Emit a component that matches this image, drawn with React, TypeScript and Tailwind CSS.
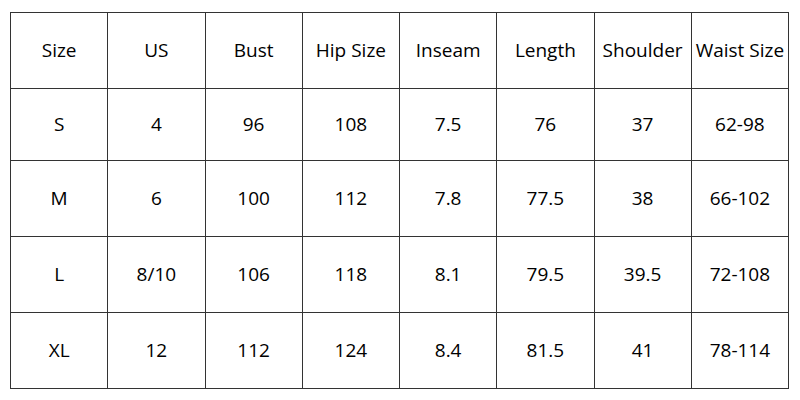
const HEADERS = ['Size', 'US', 'Bust', 'Hip Size', 'Inseam', 'Length', 'Shoulder', 'Waist Size'];

const ROWS = [
  { h: 'h-[72px]', cells: ['S', '4', '96', '108', '7.5', '76', '37', '62-98'] },
  { h: 'h-[76px]', cells: ['M', '6', '100', '112', '7.8', '77.5', '38', '66-102'] },
  { h: 'h-[76px]', cells: ['L', '8/10', '106', '118', '8.1', '79.5', '39.5', '72-108'] },
  { h: 'h-[76px]', cells: ['XL', '12', '112', '124', '8.4', '81.5', '41', '78-114'] },
];

export default function App() {
  return (
    <div className="w-[800px] h-[400px] bg-white pt-[12px] pl-[10px] font-['Open_Sans',sans-serif] text-[19px] text-black">
      <table className="table-fixed border-collapse w-[779px]">
        <thead>
          <tr className="h-[76px]">
            {HEADERS.map(h => (
              <th key={h} className="border border-[#333] font-normal text-center align-middle p-0 whitespace-nowrap">
                {h}
              </th>
            ))}
          </tr>
        </thead>
        <tbody>
          {ROWS.map(row => (
            <tr key={row.cells[0]} className={row.h}>
              {row.cells.map((c, i) => (
                <td key={i} className="border border-[#333] text-center align-middle p-0">
                  {c}
                </td>
              ))}
            </tr>
          ))}
        </tbody>
      </table>
    </div>
  );
}
